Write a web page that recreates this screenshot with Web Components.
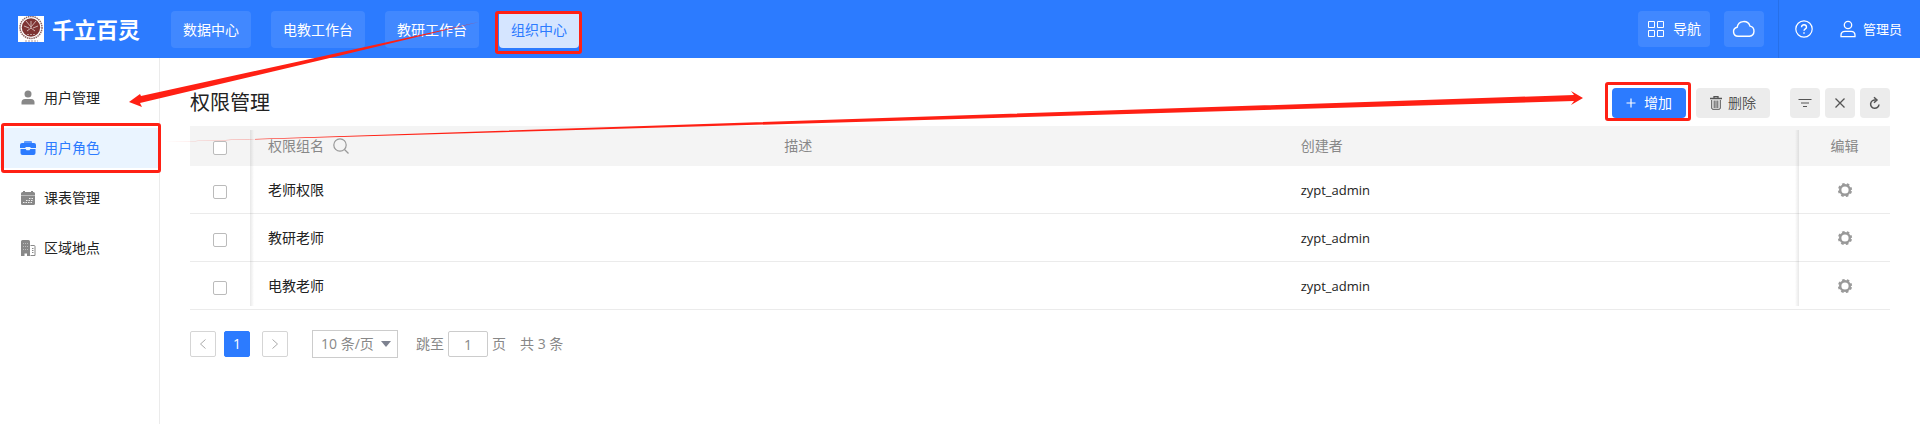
<!DOCTYPE html>
<html lang="zh-CN">
<head>
<meta charset="utf-8">
<meta name="viewport" content="width=device-width, initial-scale=1">
<title>千立百灵 - 权限管理</title>
<style>
  :root {
    --brand: #2c7bff;
    --brand-soft: #eaf4ff;
    --text: #222;
    --muted: #888;
    --line: #ebebeb;
    --mark: #ff2014;
  }
  body {
    margin: 0;
    background: #fff;
    color: var(--text);
    font: 14px/20px "Open Sans", "Noto Sans CJK SC", sans-serif;
  }
</style>
</head>
<body>
<admin-page>
  <top-bar slot="header">
    <nav-link href="#data">数据中心</nav-link>
    <nav-link href="#av">电教工作台</nav-link>
    <nav-link href="#research">教研工作台</nav-link>
    <nav-link href="#org" active>组织中心</nav-link>
  </top-bar>
  <side-menu slot="side">
    <side-item href="#users" icon="user">用户管理</side-item>
    <side-item href="#roles" icon="case" active>用户角色</side-item>
    <side-item href="#schedule" icon="calendar">课表管理</side-item>
    <side-item href="#areas" icon="building">区域地点</side-item>
  </side-menu>
  <page-toolbar>权限管理</page-toolbar>
  <role-table></role-table>
  <page-pager></page-pager>
</admin-page>
<guide-arrows></guide-arrows>

<script>
const ICONS = {
  user: '<svg width="16" height="16" viewBox="0 0 16 16" fill="currentColor"><circle cx="8" cy="4" r="3.500"/><path d="M1.500 14.500v-2q0-3.500 3.500-3.500h6q3.500 0 3.500 3.500v2z"/></svg>',
  case: '<svg width="16" height="16" viewBox="0 0 16 16" fill="currentColor"><path opacity=".75" d="M4 3.500V2q0-1 1-1h6q1 0 1 1v1.500z"/><path d="M2 3h12q2 0 2 2v3h-5.500V7h-5v1H0V5q0-2 2-2z"/><path d="M.500 9h5.200l.8 1.200h3L10.300 9h5.200v4q0 2-2 2h-11q-2 0-2-2z"/></svg>',
  calendar: '<svg width="16" height="16" viewBox="0 0 16 16"><path fill="currentColor" d="M1 5V3.500Q1 2 2.500 2H3V1h2v1h6V1h2v1h.5Q15 2 15 3.500V5z"/><path fill="currentColor" d="M1 5.500h14v8q0 1.500-1.500 1.500h-11Q1 15 1 13.500z"/><path d="M1 5.500h14" stroke="#bbb"/><path d="M9 8.500h4.500M6 10.500h7.500M3 12.500h9" stroke="#eee" stroke-dasharray="1.500 1"/></svg>',
  building: '<svg width="16" height="16" viewBox="0 0 16 16"><path fill="currentColor" d="M1 1.500Q1 0 2.500 0h6Q10 0 10 1.500V16H7v-2.500H4.500V16H1z"/><path d="M3 3.500h6M3 6.500h6M3 9.500h6" stroke="#bbb" stroke-dasharray="1 1"/><path d="M10.500 5.500H14q1 0 1 1v9h-4.500M12 8.500h1.500m-1.500 2h1.500m-1.500 2h1.500" fill="none" stroke="currentColor"/></svg>',
  grid: '<svg width="18" height="18" viewBox="0 0 18 18" fill="none" stroke="currentColor"><path d="M1.500 1.500h6v6h-6zM10.500 1.500h6v6h-6zM1.500 10.500h6v6h-6zM10.500 10.500h6v6h-6z"/></svg>',
  cloud: '<svg width="24" height="18" viewBox="0 0 24 18" fill="none" stroke="currentColor" stroke-width="1.400"><path d="M6 16.300a4.600 4.600 0 0 1-.800-9.100 6.600 6.600 0 0 1 12.800-1.100 5.200 5.200 0 0 1-.500 10.200z"/></svg>',
  help: '<svg width="18" height="18" viewBox="0 0 18 18" fill="none" stroke="currentColor" stroke-width="1.200"><circle cx="9" cy="9" r="8.200"/><path d="M6.500 7.200c0-3.300 5-3.300 5 0 0 1.700-2.500 1.700-2.500 3.600M9 12.300v1.400" stroke-width="1.400"/></svg>',
  person: '<svg width="16" height="18" viewBox="0 0 16 18" fill="none" stroke="currentColor" stroke-width="1.300"><circle cx="8" cy="5" r="3.700"/><path d="M1 16.700v-1.400q0-4 4-4h6q4 0 4 4v1.400z"/></svg>',
  plus: '<svg width="10" height="10" viewBox="0 0 10 10" stroke="currentColor" stroke-width="1.200"><path d="M5 .500v9M.500 5h9"/></svg>',
  trash: '<svg width="12" height="14" viewBox="0 0 12 14" fill="none" stroke="currentColor"><path d="M0 2.500h12M4 2V.700h4V2" stroke-width="1.300"/><path d="M1.700 4v8q0 1.300 1.300 1.300h6q1.300 0 1.300-1.300V4M4.200 4.500V12M6 4.500V12M7.800 4.500V12"/></svg>',
  filter: '<svg width="14" height="10" viewBox="0 0 14 10" stroke="currentColor" stroke-width="1.200"><path d="M.500 1.500h13M3 5h8M5 8.500h4"/></svg>',
  close: '<svg width="12" height="12" viewBox="0 0 12 12" stroke="currentColor" stroke-width="1.300"><path d="M1.500 1.500l9 9M10.500 1.500l-9 9"/></svg>',
  refresh: '<svg width="12" height="14" viewBox="0 0 12 14" fill="none" stroke="currentColor" stroke-width="1.500"><path d="M6.500 4A4.200 4.200 0 1 0 10 8.500M5 1.200L8 4 5 6.800"/></svg>',
  search: '<svg width="16" height="16" viewBox="0 0 16 16" fill="none" stroke="currentColor" stroke-width="1.200"><circle cx="7" cy="7" r="6.200"/><path d="M11.500 11.500L15.500 15.500"/></svg>',
  gear: '<svg width="16" height="16" viewBox="0 0 16 16" fill="none" stroke="currentColor"><circle cx="8" cy="8" r="4.800" stroke-width="2.400"/><circle cx="8" cy="8" r="6.200" stroke-width="1.800" stroke-dasharray="2.600 2.270" stroke-dashoffset="-1.130"/></svg>',
  prev: '<svg width="8" height="12" viewBox="0 0 8 12" fill="none" stroke="currentColor"><path d="M6.500 1.500L1.500 6l5 4.500"/></svg>',
  next: '<svg width="8" height="12" viewBox="0 0 8 12" fill="none" stroke="currentColor"><path d="M1.500 1.500L6.500 6l-5 4.500"/></svg>'
};

class BaseElement extends HTMLElement {
  constructor() {
    super();
    this.attachShadow({ mode: 'open' });
  }

  connectedCallback() {
    this.shadowRoot.innerHTML = `
      <style>
        * { box-sizing: border-box; }
        svg { display: block; flex: none; }
        button, input, select { font: inherit; color: inherit; margin: 0; }
        button { cursor: pointer; }
        a { color: inherit; text-decoration: none; }
        .marked { position: relative; }
        .marked::after {
          content: "";
          position: absolute;
          border: 3px solid var(--mark);
          border-radius: 3px;
          pointer-events: none;
        }
      </style>
      ${this.render()}
    `;
  }
}

class AdminPage extends BaseElement {
  render() {
    return `
      <style>
        :host { display: flex; flex-direction: column; min-height: 100vh; }
        .body { display: flex; flex: 1; }
        aside { flex: none; width: 160px; padding-top: 20px; border-right: 1px solid var(--line); }
        main { flex: 1; min-width: 0; padding: 30px 30px 0; }
      </style>
      <slot name="header"></slot>
      <div class="body">
        <aside><slot name="side"></slot></aside>
        <main><slot></slot></main>
      </div>
    `;
  }
}

class TopBar extends BaseElement {
  render() {
    return `
      <style>
        :host { display: flex; align-items: center; height: 58px; padding: 0 18px; background: var(--brand); color: #fff; }
        .logo { margin-right: 8px; }
        .name { margin: 0 31px 0 0; font-size: 22px; line-height: 30px; font-weight: 700; }
        nav { display: flex; gap: 20px; }
        .tools { display: flex; align-items: center; margin-left: auto; align-self: stretch; }
        button { display: flex; align-items: center; justify-content: center; padding: 0; border: 0; background: none; }
        .box { height: 36px; border-radius: 4px; background: rgba(255, 255, 255, 0.1); }
        .guide { width: 72px; gap: 8px; margin-right: 14px; }
        .cloud { width: 40px; margin-right: 14px; }
        .account { align-self: stretch; display: flex; align-items: center; gap: 27px; padding-left: 16px; border-left: 1px solid #2770e9; }
        .user { gap: 7px; font-size: 13px; }
      </style>
      <svg class="logo" width="26" height="26" viewBox="0 0 26 26" role="img" aria-label="校徽">
        <path fill="#fff" d="M0 0h26v26H0z"/>
        <circle cx="13" cy="11.500" r="11" fill="#fff" stroke="#8b6260" stroke-width="1.500" stroke-dasharray="1.500 .700"/>
        <circle cx="13" cy="11.500" r="9.200" fill="#7e3433"/>
        <path d="M13 5v8M8 5l5 6 5-6M6 10l5 2m9-2l-5 2M9 15l4-3 4 3" fill="none" stroke="#cdb0af"/>
        <path d="M9 18.500h8M7 25h13" stroke="#b79a99" stroke-dasharray="2 1"/>
      </svg>
      <h1 class="name">千立百灵</h1>
      <nav><slot></slot></nav>
      <div class="tools">
        <button class="box guide">${ICONS.grid}导航</button>
        <button class="box cloud" aria-label="云盘">${ICONS.cloud}</button>
        <div class="account">
          <button aria-label="帮助">${ICONS.help}</button>
          <button class="user">${ICONS.person}管理员</button>
        </div>
      </div>
    `;
  }
}

class NavLink extends BaseElement {
  render() {
    const active = this.hasAttribute('active');
    return `
      <style>
        :host { display: block; }
        a { display: block; padding: 9px 12px 8px; border-radius: 4px; background: rgba(255, 255, 255, 0.1); }
        .active { background: #d5e5ff; color: var(--brand); }
        .marked::after { inset: 0 -3px -6px -4px; }
      </style>
      <a href="${this.getAttribute('href')}" class="${active ? 'active marked' : ''}"><slot></slot></a>
    `;
  }
}

class SideMenu extends BaseElement {
  render() {
    return `
      <style>:host { display: block; } nav { display: flex; flex-direction: column; gap: 10px; }</style>
      <nav><slot></slot></nav>
    `;
  }
}

class SideItem extends BaseElement {
  render() {
    const active = this.hasAttribute('active');
    return `
      <style>
        :host { display: block; }
        a { display: flex; align-items: center; gap: 8px; height: 40px; padding-left: 20px; }
        svg { color: #888; }
        .active { background: var(--brand-soft); color: var(--brand); }
        .active svg { color: var(--brand); }
        .marked::after { inset: -5px -2px -5px 1px; }
      </style>
      <a href="${this.getAttribute('href')}" class="${active ? 'active marked' : ''}">${ICONS[this.getAttribute('icon')]}<slot></slot></a>
    `;
  }
}

class PageToolbar extends BaseElement {
  render() {
    return `
      <style>
        :host { display: flex; align-items: center; margin-bottom: 8px; }
        h2 { margin: 0 auto 0 0; font-size: 20px; line-height: 30px; font-weight: 400; }
        button { display: flex; align-items: center; justify-content: center; width: 30px; height: 30px; padding: 0; border: 0; border-radius: 4px; background: #ececec; color: #555; }
        .wide { width: 74px; }
        .add { gap: 8px; background: var(--brand); color: #fff; }
        .delete { gap: 6px; }
        .actions { display: flex; gap: 10px; margin-right: 20px; }
        .tools { display: flex; gap: 5px; }
        .marked::after { inset: -6px -5px -3px -7px; }
      </style>
      <h2><slot></slot></h2>
      <div class="actions">
        <button class="wide add marked">${ICONS.plus}增加</button>
        <button class="wide delete">${ICONS.trash}删除</button>
      </div>
      <div class="tools">
        <button aria-label="筛选">${ICONS.filter}</button>
        <button aria-label="关闭">${ICONS.close}</button>
        <button aria-label="刷新">${ICONS.refresh}</button>
      </div>
    `;
  }
}

class RoleTable extends BaseElement {
  get rows() {
    return [
      { name: '老师权限', desc: '', creator: 'zypt_admin' },
      { name: '教研老师', desc: '', creator: 'zypt_admin' },
      { name: '电教老师', desc: '', creator: 'zypt_admin' }
    ];
  }

  render() {
    const rows = this.rows.map(row => `
      <tr>
        <td class="pick"><input type="checkbox" aria-label="选择${row.name}"></td>
        <td>${row.name}</td>
        <td>${row.desc}</td>
        <td class="creator">${row.creator}</td>
        <td class="edit"><button aria-label="编辑${row.name}">${ICONS.gear}</button></td>
      </tr>
    `).join('');
    return `
      <style>
        :host { display: block; position: relative; }
        table { width: 100%; table-layout: fixed; border-collapse: separate; border-spacing: 0; }
        th, td { padding: 0 18px; text-align: left; font-weight: 400; }
        th { height: 40px; background: #f4f4f4; color: var(--muted); }
        td { height: 48px; border-bottom: 1px solid var(--line); }
        .pick { width: 60px; padding: 4px 0 0; text-align: center; }
        .creator { font-size: 13px; }
        .edit { width: 91px; padding: 0; text-align: center; }
        .find { display: flex; align-items: center; gap: 9px; }
        button { display: block; padding: 0; border: 0; background: none; color: #999; }
        .edit button { margin: 0 auto; }
        input { appearance: none; display: block; width: 14px; height: 14px; margin: 0 auto; border: 1px solid #bbb; border-radius: 2px; background: #fff; }
        /* shadows along the two fixed columns */
        .edge { position: absolute; top: 4px; bottom: 4px; width: 4px; pointer-events: none; }
        .left { left: 60px; background: linear-gradient(to right, rgba(0, 0, 0, 0.09), transparent); }
        .right { right: 91px; background: linear-gradient(to left, rgba(0, 0, 0, 0.09), transparent); }
      </style>
      <table>
        <thead>
          <tr>
            <th class="pick"><input type="checkbox" aria-label="全选"></th>
            <th><div class="find">权限组名<button aria-label="搜索">${ICONS.search}</button></div></th>
            <th>描述</th>
            <th>创建者</th>
            <th class="edit">编辑</th>
          </tr>
        </thead>
        <tbody>${rows}</tbody>
      </table>
      <div class="edge left"></div>
      <div class="edge right"></div>
    `;
  }
}

class PagePager extends BaseElement {
  render() {
    return `
      <style>
        :host { display: flex; align-items: center; margin-top: 20px; color: var(--muted); }
        button { display: flex; align-items: center; justify-content: center; width: 26px; height: 26px; padding: 0; border: 1px solid #d5d5d5; border-radius: 2px; background: #fff; color: #aaa; }
        .current { margin: 0 12px 0 8px; border-color: var(--brand); background: var(--brand); color: #fff; }
        .size { display: grid; align-items: center; margin: 0 18px 0 24px; }
        .size > * { grid-area: 1 / 1; }
        select { appearance: none; width: 86px; height: 28px; padding: 0 0 0 8px; border: 1px solid #ccc; border-radius: 0; background: #fff; }
        .size svg { justify-self: end; margin-right: 7px; color: #7d8290; pointer-events: none; }
        label { display: flex; align-items: center; gap: 4px; margin-right: 14px; }
        .jump { width: 40px; height: 26px; padding: 0; border: 1px solid #ccc; border-radius: 2px; text-align: center; }
      </style>
      <button aria-label="上一页">${ICONS.prev}</button>
      <button class="current">1</button>
      <button aria-label="下一页">${ICONS.next}</button>
      <div class="size">
        <select aria-label="每页条数"><option>10 条/页</option><option>20 条/页</option><option>50 条/页</option></select>
        <svg width="10" height="6" viewBox="0 0 10 6" fill="currentColor"><path d="M0 0h10L5 6z"/></svg>
      </div>
      <label>跳至<input class="jump" type="text" value="1">页</label>
      <span>共 3 条</span>
    `;
  }
}

class GuideArrows extends BaseElement {
  render() {
    return `
      <style>
        :host { position: absolute; top: 0; left: 0; right: 0; pointer-events: none; }
        svg { width: 100%; fill: var(--mark); }
      </style>
      <svg viewBox="0 0 1920 424" aria-hidden="true">
        <path d="M479 22L333 54 141 96l-1-2-11 8 13 5-2-4 194-46z"/>
        <path d="M165 142L1574 95l-3-4 12 7-12 7 3-4z"/>
      </svg>
    `;
  }
}

customElements.define('admin-page', AdminPage);
customElements.define('top-bar', TopBar);
customElements.define('nav-link', NavLink);
customElements.define('side-menu', SideMenu);
customElements.define('side-item', SideItem);
customElements.define('page-toolbar', PageToolbar);
customElements.define('role-table', RoleTable);
customElements.define('page-pager', PagePager);
customElements.define('guide-arrows', GuideArrows);
</script>
</body>
</html>
